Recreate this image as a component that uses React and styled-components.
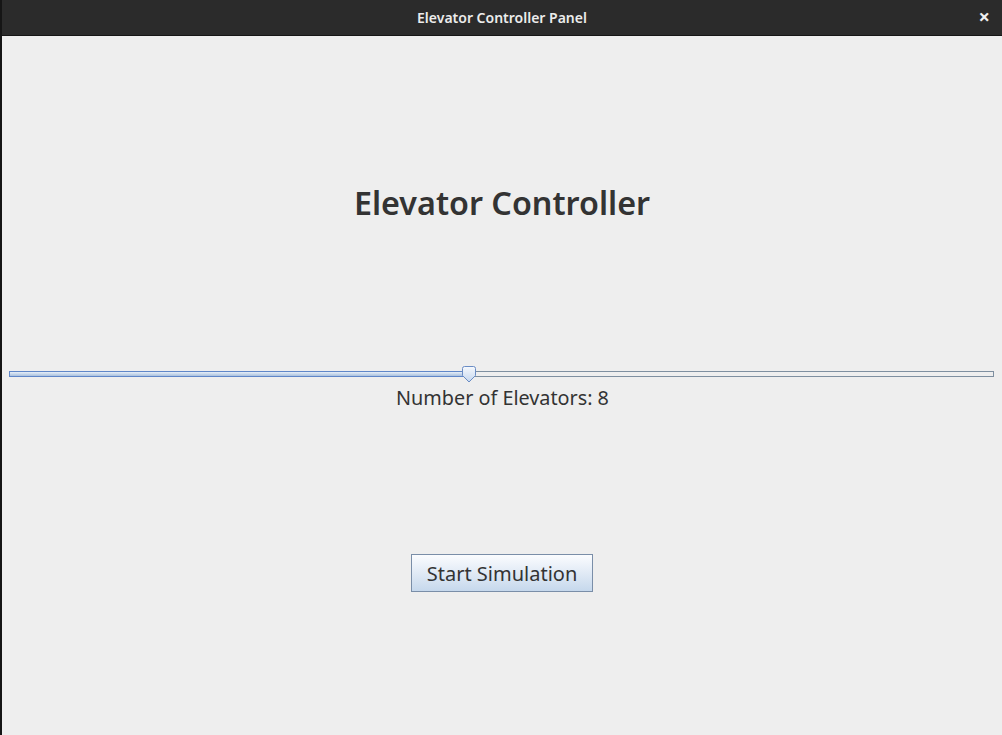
import React, { useState } from "react";
import styled, { createGlobalStyle } from "styled-components";

const GlobalStyle = createGlobalStyle`
  html, body {
    margin: 0;
    padding: 0;
    background: #151515;
  }
  #root {
    height: 735px;
  }
`;

function App() {
  const [count] = useState(8);
  const min = 1;
  const max = 16;
  const pct = ((count - min) / (max - min)) * 100;

  return (
    <>
      <GlobalStyle />
      <Window>
        <TitleBar>
          <WindowTitle>Elevator Controller Panel</WindowTitle>
          <CloseButton>×</CloseButton>
        </TitleBar>
        <Content>
          <Heading>Elevator Controller</Heading>
          <SliderArea>
            <Track>
              <Filled style={{ width: pct + "%" }} />
              <Thumb style={{ left: pct + "%" }}>
                <svg width="16" height="17" viewBox="0 0 16 17">
                  <defs>
                    <linearGradient id="thumbFill" x1="0" y1="0" x2="0" y2="1">
                      <stop offset="0" stopColor="#f6f9fd" />
                      <stop offset="1" stopColor="#c4d6ee" />
                    </linearGradient>
                  </defs>
                  <path
                    d="M1.5 2.5 Q1.5 0.5 3.5 0.5 L12.5 0.5 Q14.5 0.5 14.5 2.5 L14.5 9.5 L8 16 L1.5 9.5 Z"
                    fill="url(#thumbFill)"
                    stroke="#6a8cc4"
                    strokeWidth="1"
                  />
                </svg>
              </Thumb>
            </Track>
            <CountLabel>Number of Elevators: {count}</CountLabel>
          </SliderArea>
          <StartButton>Start Simulation</StartButton>
        </Content>
      </Window>
    </>
  );
}

const Window = styled.div`
  margin-left: 2px;
  height: 735px;
  display: flex;
  flex-direction: column;
  background: #eeeeee;
  font-family: "Noto Sans", "Open Sans", sans-serif;
`;

const TitleBar = styled.div`
  position: relative;
  height: 35px;
  flex-shrink: 0;
  background: #2b2b2b;
  border-bottom: 1px solid #161616;
  display: flex;
  align-items: center;
  justify-content: center;
`;

const WindowTitle = styled.div`
  color: #ececec;
  font-size: 14px;
  font-weight: 600;
`;

const CloseButton = styled.div`
  position: absolute;
  right: 12px;
  top: 7px;
  color: #f0f0f0;
  font-size: 20px;
  font-weight: 700;
  line-height: 20px;
`;

const Content = styled.div`
  flex: 1;
  display: flex;
  flex-direction: column;
  align-items: center;
`;

const Heading = styled.h1`
  margin: 144px 0 0;
  font-size: 32.3px;
  line-height: 44px;
  font-weight: 600;
  color: #333333;
`;

const SliderArea = styled.div`
  align-self: stretch;
  margin-top: 147px;
  padding: 0 6px 0 7px;
  display: flex;
  flex-direction: column;
  align-items: center;
`;

const Track = styled.div`
  position: relative;
  align-self: stretch;
  margin-right: 2px;
  height: 6px;
  box-sizing: border-box;
  border: 1px solid #7e8fa0;
  background: #eeeeee;
`;

const Filled = styled.div`
  position: absolute;
  left: -1px;
  top: -1px;
  bottom: -1px;
  box-sizing: border-box;
  border: 1px solid #5f86c8;
  border-right: none;
  background: linear-gradient(#e6eef8, #a9c0de);
`;

const Thumb = styled.div`
  position: absolute;
  top: -6px;
  width: 16px;
  height: 17px;
  margin-left: -8px;
  line-height: 0;
`;

const CountLabel = styled.div`
  margin-top: 7px;
  font-size: 19.8px;
  line-height: 28px;
  color: #333333;
`;

const StartButton = styled.button`
  margin-top: 142px;
  width: 182px;
  height: 38px;
  padding: 0;
  border: 1px solid #7a8ea8;
  border-radius: 0;
  background: linear-gradient(#fbfcfe, #c6d8ec);
  font-family: "Noto Sans", "Open Sans", sans-serif;
  font-size: 20px;
  color: #333333;
  cursor: pointer;
`;

export default App;
